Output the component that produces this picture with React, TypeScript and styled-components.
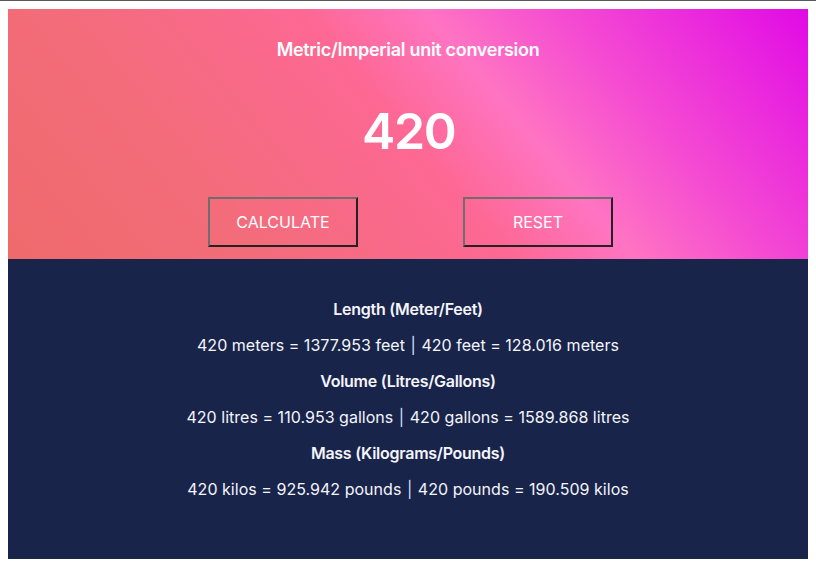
import React from "react";
import styled, { createGlobalStyle } from "styled-components";

const Global = createGlobalStyle`
  html { border-top: 1px solid #5a5a5a; }
  body {
    margin: 8px;
    font-family: Inter, "Noto Sans", sans-serif;
    background: #ffffff;
  }
`;

const Card = styled.div`
  width: 800px;
  display: flex;
  flex-direction: column;
`;

const Hero = styled.section`
  height: 250px;
  box-sizing: border-box;
  padding: 30px 0 12px;
  display: flex;
  flex-direction: column;
  align-items: center;
  color: #ffffff;
  background: linear-gradient(
    50deg,
    #ef6a6c 0%,
    #f36c7a 25%,
    #fd6894 50%,
    #ff74c2 62%,
    #f54cd2 75%,
    #e10ae6 100%
  );
`;

const Title = styled.h1`
  margin: 0;
  font-size: 18px;
  line-height: 22px;
  font-weight: 600;
  letter-spacing: -0.3px;
`;

const Value = styled.div`
  margin-top: 40px;
  font-size: 50px;
  line-height: 60px;
  font-weight: 600;
  letter-spacing: -1.3px;
  text-indent: 1.3px;
`;

const Actions = styled.div`
  margin-top: 36px;
  display: flex;
  gap: 105px;
  padding-left: 5px;
`;

const Button = styled.button`
  width: 150px;
  height: 50px;
  box-sizing: border-box;
  background: transparent;
  border: 2px solid;
  border-color: #6e6e6e #222222 #222222 #6e6e6e;
  color: #ffffff;
  font-family: Inter, "Noto Sans", sans-serif;
  font-size: 16px;
  text-transform: uppercase;
  cursor: pointer;
`;

const Results = styled.section`
  height: 300px;
  box-sizing: border-box;
  padding-top: 40px;
  background: #19244b;
  color: #f4f5fa;
  display: flex;
  flex-direction: column;
  align-items: center;
`;

const Heading = styled.h2`
  margin: 0 0 16px;
  font-size: 16px;
  line-height: 20px;
  font-weight: 600;
  letter-spacing: -0.26px;
`;

const Line = styled.p`
  margin: 0 0 16px;
  font-size: 16px;
  line-height: 20px;
  font-weight: 400;
  letter-spacing: 0.03px;
`;

const Sep = styled.span`
  color: #cfe0ff;
  padding: 0 1px;
`;

const rows = [
  {
    title: "Length (Meter/Feet)",
    a: "420 meters = 1377.953 feet",
    b: "420 feet = 128.016 meters",
  },
  {
    title: "Volume (Litres/Gallons)",
    a: "420 litres = 110.953 gallons",
    b: "420 gallons = 1589.868 litres",
  },
  {
    title: "Mass (Kilograms/Pounds)",
    a: "420 kilos = 925.942 pounds",
    b: "420 pounds = 190.509 kilos",
  },
];

export default function App() {
  return (
    <>
      <Global />
      <Card>
        <Hero>
          <Title>Metric/Imperial unit conversion</Title>
          <Value>420</Value>
          <Actions>
            <Button>Calculate</Button>
            <Button>Reset</Button>
          </Actions>
        </Hero>
        <Results>
          {rows.map((r) => (
            <React.Fragment key={r.title}>
              <Heading>{r.title}</Heading>
              <Line>
                {r.a} <Sep>|</Sep> {r.b}
              </Line>
            </React.Fragment>
          ))}
        </Results>
      </Card>
    </>
  );
}
